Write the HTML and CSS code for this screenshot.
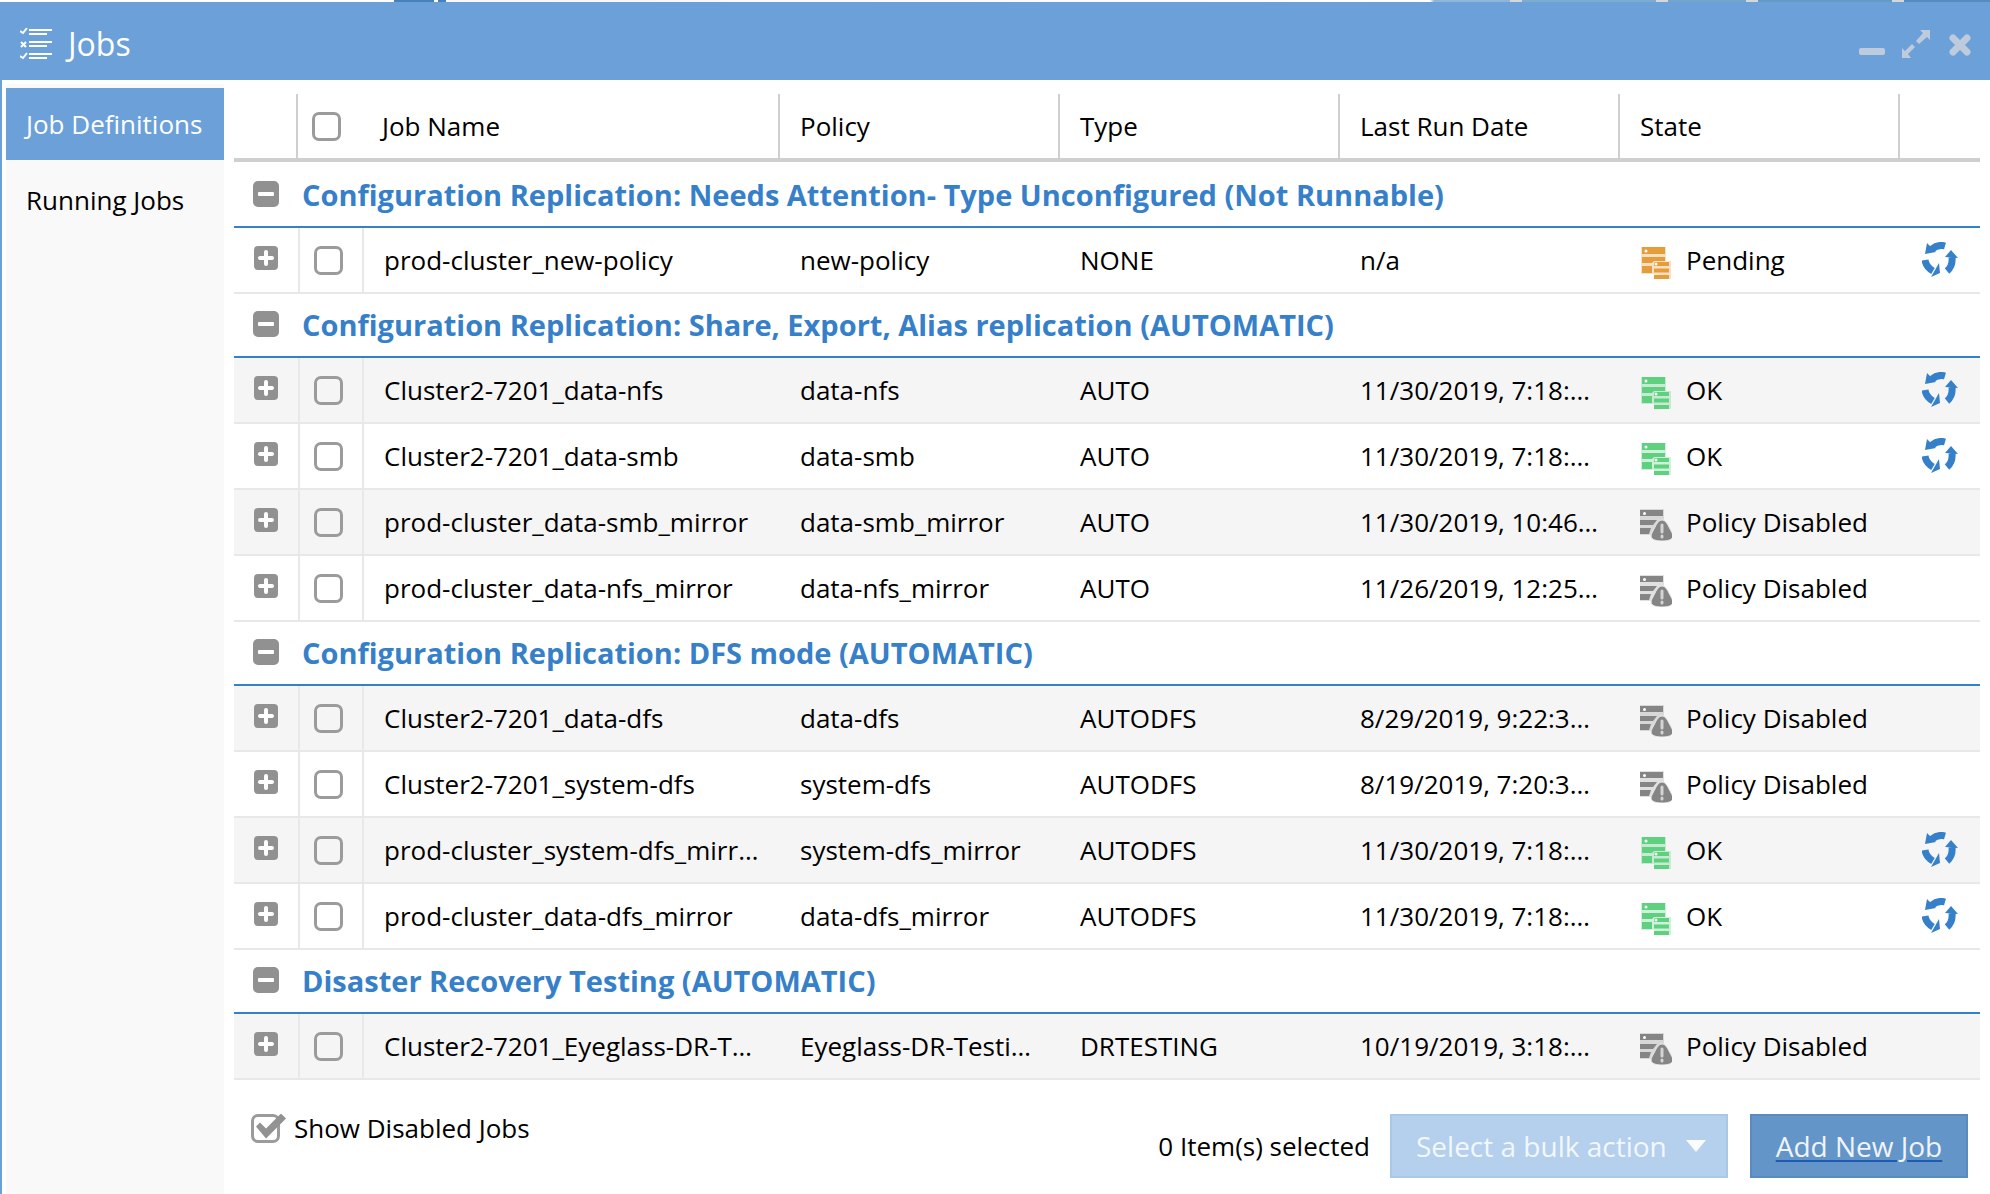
FILE: index.html
```html
<!DOCTYPE html>
<html lang="en">
<head>
<meta charset="utf-8">
<title>Jobs</title>
<link rel="stylesheet" href="styles.css">
</head>
<body>
<svg class="sprite" aria-hidden="true">
  <symbol id="minus" viewBox="0 0 26 26"><rect width="26" height="26" rx="5" fill="#919191"/><rect x="5" y="11" width="16" height="4" rx="1" fill="#fff"/></symbol>
  <symbol id="plus" viewBox="0 0 26 26"><rect x="1" y="1" width="24" height="24" rx="4" fill="#919191"/><path d="M13 7v12M7 13h12" stroke="#fff" stroke-width="4" stroke-linecap="round"/></symbol>
  <symbol id="servers" viewBox="0 0 32 32">
    <path fill="currentColor" opacity=".3" d="M1 0h25v14h5v18H14v-5H1z"/>
    <path fill="currentColor" d="M2 0h23v7H2zM2 10h23v4H14l-2 2H2zM2 19h10v7H2zM15 15h14v4H14v-3zM14 21.500h15v4H14zM14 28h15v4H14z"/>
    <circle cx="6" cy="4" r="1.500" fill="#fff"/><circle cx="16" cy="17" r="1.500" fill="#fff"/>
  </symbol>
  <symbol id="disabled" viewBox="0 0 32 32">
    <path fill="currentColor" opacity=".25" d="M0 0h24v14l-12 12H0z"/>
    <path fill="currentColor" d="M0 1h23v6H0zM0 11h17l-4 5H0zM0 19h11l-2 6H0z"/>
    <circle cx="4.500" cy="4.500" r="1.500" fill="#fff"/>
    <path fill="currentColor" stroke="#ebebeb" stroke-width="1" d="M22 11c3 0 5 3 7 7s4 7 4 9c0 4-6 5-11 5s-11-1-11-5c0-2 2-5 4-9s4-7 7-7z"/>
    <path d="M22 16v7M22 27v1" stroke="#d4d4d4" stroke-width="3" stroke-linecap="round"/>
  </symbol>
  <symbol id="cycle" viewBox="0 0 36 36">
    <path d="M23 4Q16 2 10 7M3 18Q4 25 11 29M25 29Q31 24 30 15" fill="none" stroke="#3680c9" stroke-width="7"/>
    <path fill="#3680c9" d="M5 1l9 9-11 2zM9 35l9-4-1-10zM23 15l13 1-7-8z"/>
  </symbol>
</svg>
<div class="backdrop"></div>
<section class="window">
  <header class="titlebar">
    <svg class="title-icon" viewBox="0 0 32 32" fill="none" stroke="#fff" stroke-width="2"><path d="M9 2h23M9 6h18M9 14h23M9 18h18M9 26h23M9 30h18M0 3l3 2 4-5M1 14l5 5M6 14l-5 5M0 28l3 2 4-5"/></svg>
    <h1>Jobs</h1>
    <div class="tools">
      <button type="button" aria-label="Minimize"><svg viewBox="0 0 28 28"><rect x="1" y="18" width="26" height="7" rx="2"/></svg></button>
      <button type="button" aria-label="Maximize"><svg viewBox="0 0 28 28"><path d="M18 0h10v10l-3-3-8 7-3-3 7-8zM0 18l3 3 7-7 3 3-7 7 3 4H0z"/></svg></button>
      <button type="button" aria-label="Close"><svg viewBox="0 0 28 28"><path d="M7 8l14 14M21 8L7 22" stroke="#bdcbdc" stroke-width="7" stroke-linecap="round"/></svg></button>
    </div>
  </header>
  <div class="body">
    <nav class="sidebar">
      <a class="active" href="#definitions">Job Definitions</a>
      <a href="#running">Running Jobs</a>
    </nav>
    <main class="content">
      <table class="grid">
        <colgroup><col class="c-toggle"><col class="c-check"><col><col class="c-data"><col class="c-data"><col class="c-data"><col class="c-data"><col class="c-action"></colgroup>
        <thead><tr><th></th><th class="check"><input type="checkbox" aria-label="Select all jobs"></th><th>Job Name</th><th>Policy</th><th>Type</th><th>Last Run Date</th><th>State</th><th></th></tr></thead>
        <tbody id="rows"></tbody>
      </table>
      <footer class="footer">
        <label class="show"><input class="tick" type="checkbox" checked>Show Disabled Jobs</label>
        <span class="count">0 Item(s) selected</span>
        <span class="bulk"><select aria-label="Bulk action" disabled><option>Select a bulk action</option></select></span>
        <button class="add" type="button">Add New Job</button>
      </footer>
    </main>
  </div>
</section>
<script src="jobs.js"></script>
</body>
</html>
```
FILE: styles.css
```css
* { box-sizing: border-box; }
body { margin: 0; min-height: 100vh; display: flex; flex-direction: column; background: #fff; color: #000; font: 26px/36px "Open Sans", "Noto Sans", sans-serif; }
button, input, select { font: inherit; margin: 0; }
svg { display: block; }
.sprite { position: absolute; width: 0; height: 0; }
.backdrop { height: 2px; background: linear-gradient(90deg, #fff 394px, #4781bb 394px, #4781bb 434px, #fff 434px, #fff 438px, #4781bb 438px, #4781bb 446px, #f8f8f8 446px, #fff 1430px, #8fb6d6 1434px, #8fb6d6 1510px, #d4d8dc 1510px, #d4d8dc 1522px, #7eabd0 1522px, #7eabd0 1656px, #d4d8dc 1656px, #d4d8dc 1668px, #74a4cc 1668px, #74a4cc 1746px, #d4d8dc 1746px, #d4d8dc 1758px, #649ac6 1758px, #649ac6 1892px, #d4d8dc 1892px, #d4d8dc 1904px, #558cc0 1904px); }
.window { flex: 1; display: flex; flex-direction: column; border-left: 2px solid #6ca0d8; }
.titlebar { height: 78px; background: #6ca0d8; display: flex; align-items: center; padding: 6px 16px 0 18px; }
.title-icon { width: 32px; height: 32px; margin-right: 16px; }
h1 { margin: 0; color: #fff; font-size: 32px; line-height: 40px; font-weight: 400; }
.tools { margin-left: auto; display: flex; gap: 16px; }
.tools button { border: 0; padding: 0; background: none; width: 28px; height: 28px; }
.tools svg { width: 28px; height: 28px; fill: #bdcbdc; }
.body { flex: 1; display: flex; padding: 4px 10px 0 4px; }
.sidebar { width: 218px; flex: none; background: #f9f9f9; padding-top: 4px; margin-right: 10px; }
.sidebar a { display: flex; align-items: center; height: 72px; margin-bottom: 4px; padding: 0 20px; color: #000; text-decoration: none; white-space: nowrap; }
.sidebar .active { background: #6ca0d8; color: #fff; }
.content { flex: 1; min-width: 0; padding-top: 10px; }
.grid { width: 100%; table-layout: fixed; border-collapse: separate; border-spacing: 0; }
.c-toggle, .c-check { width: 64px; }
.c-data { width: 280px; }
.c-action { width: 80px; }
th, td { padding: 0 20px; text-align: left; font-weight: 400; white-space: nowrap; overflow: hidden; text-overflow: ellipsis; }
th { height: 68px; border-right: 2px solid #cfcfcf; border-bottom: 4px solid #cfcfcf; }
th.check, th:last-child { border-right-width: 0; }
td { height: 66px; border-bottom: 2px solid #e8e8e8; }
.alt td { background: #f5f5f5; }
.check, .toggle { padding: 0 0 0 14px; }
.toggle { padding-left: 19px; }
td.check, td.name { border-left: 2px solid #e8e8e8; }
.group td { height: 64px; border-bottom-color: #3680c9; color: #3680c9; font-size: 29px; font-weight: 700; padding-left: 4px; }
.group:first-child td { height: 66px; padding-top: 2px; }
.group .toggle { padding-left: 19px; }
.toggle button { display: block; border: 0; padding: 0; background: none; width: 26px; height: 26px; margin-bottom: 4px; }
.group .toggle button { margin-bottom: 2px; }
.toggle svg { width: 26px; height: 26px; }
input[type="checkbox"] { appearance: none; display: block; width: 29px; height: 29px; border: 3px solid #9b9b9b; border-radius: 7px; background: #fff; }
.alt input[type="checkbox"] { background: none; }
.state { display: flex; align-items: center; gap: 14px; }
.state svg { width: 32px; height: 32px; margin-top: 6px; }
.ok { color: #5fd080; }
.pending { color: #e59d3c; }
.off { color: #858585; }
td.action { padding: 0 0 0 22px; }
.action button { display: block; border: 0; padding: 0; background: none; width: 36px; height: 36px; }
.action svg { width: 36px; height: 36px; }
.footer { display: flex; align-items: center; padding: 34px 12px 16px 17px; }
.show { display: flex; align-items: center; gap: 14px; align-self: flex-start; height: 28px; margin-right: auto; }
.show .tick { position: relative; overflow: visible; background: none; }
.tick:checked::after { content: ""; position: absolute; left: 2px; top: -3px; width: 30px; height: 26px; background: #929292; clip-path: polygon(0 13px, 4px 9px, 10px 15px, 25px 0, 30px 5px, 10px 25px); }
.count { margin-right: 20px; }
.bulk { display: grid; align-items: center; width: 338px; margin-right: 22px; }
.bulk > *, .bulk::after { grid-area: 1 / 1; }
.bulk::after { content: ""; justify-self: end; width: 20px; height: 12px; margin-right: 22px; background: #fafcfe; clip-path: polygon(0 0, 100% 0, 50% 100%); z-index: 1; pointer-events: none; }
.bulk select { appearance: none; width: 100%; height: 64px; border: 2px solid #a9c8e6; border-radius: 0; background: #b5d0ec; color: #f2f7fc; font-size: 28px; padding: 0 24px; opacity: 1; }
.add { width: 218px; height: 64px; border: 2px solid #5a8bbf; background: #6395c9; color: #f0f4f9; font-size: 28px; padding: 0; text-decoration: underline #1d5bb4 2px; text-underline-offset: 3px; white-space: nowrap; }
```
FILE: jobs.js
```js
const groups = [
  ["Configuration Replication: Needs Attention- Type Unconfigured (Not Runnable)", [
    ["prod-cluster_new-policy", "new-policy", "NONE", "n/a", "pending"]]],
  ["Configuration Replication: Share, Export, Alias replication (AUTOMATIC)", [
    ["Cluster2-7201_data-nfs", "data-nfs", "AUTO", "11/30/2019, 7:18:23 AM", "ok"],
    ["Cluster2-7201_data-smb", "data-smb", "AUTO", "11/30/2019, 7:18:23 AM", "ok"],
    ["prod-cluster_data-smb_mirror", "data-smb_mirror", "AUTO", "11/30/2019, 10:46:10 AM", "off"],
    ["prod-cluster_data-nfs_mirror", "data-nfs_mirror", "AUTO", "11/26/2019, 12:25:10 PM", "off"]]],
  ["Configuration Replication: DFS mode (AUTOMATIC)", [
    ["Cluster2-7201_data-dfs", "data-dfs", "AUTODFS", "8/29/2019, 9:22:30 AM", "off"],
    ["Cluster2-7201_system-dfs", "system-dfs", "AUTODFS", "8/19/2019, 7:20:30 AM", "off"],
    ["prod-cluster_system-dfs_mirror", "system-dfs_mirror", "AUTODFS", "11/30/2019, 7:18:23 AM", "ok"],
    ["prod-cluster_data-dfs_mirror", "data-dfs_mirror", "AUTODFS", "11/30/2019, 7:18:23 AM", "ok"]]],
  ["Disaster Recovery Testing (AUTOMATIC)", [
    ["Cluster2-7201_Eyeglass-DR-Testing", "Eyeglass-DR-Testing", "DRTESTING", "10/19/2019, 3:18:23 AM", "off"]]]
];
const labels = { ok: "OK", pending: "Pending", off: "Policy Disabled" };
const icon = id => `<svg aria-hidden="true"><use href="#${id}"/></svg>`;
let html = "";
let index = 0;
for (const [title, jobs] of groups) {
  html += `<tr class="group"><td class="toggle"><button type="button" aria-label="Collapse group">${icon("minus")}</button></td><td colspan="7">${title}</td></tr>`;
  jobs.forEach(([name, policy, type, date, state]) => {
    html += `<tr class="${index++ % 2 ? "alt" : ""}">
      <td class="toggle"><button type="button" aria-label="Expand row">${icon("plus")}</button></td>
      <td class="check"><input type="checkbox" aria-label="${name}"></td>
      <td class="name">${name}</td><td>${policy}</td><td>${type}</td><td>${date}</td>
      <td><div class="state"><span class="${state}">${icon(state === "off" ? "disabled" : "servers")}</span>${labels[state]}</div></td>
      <td class="action">${state === "off" ? "" : `<button type="button" aria-label="Run job">${icon("cycle")}</button>`}</td></tr>`;
  });
}
document.getElementById("rows").innerHTML = html;
```
